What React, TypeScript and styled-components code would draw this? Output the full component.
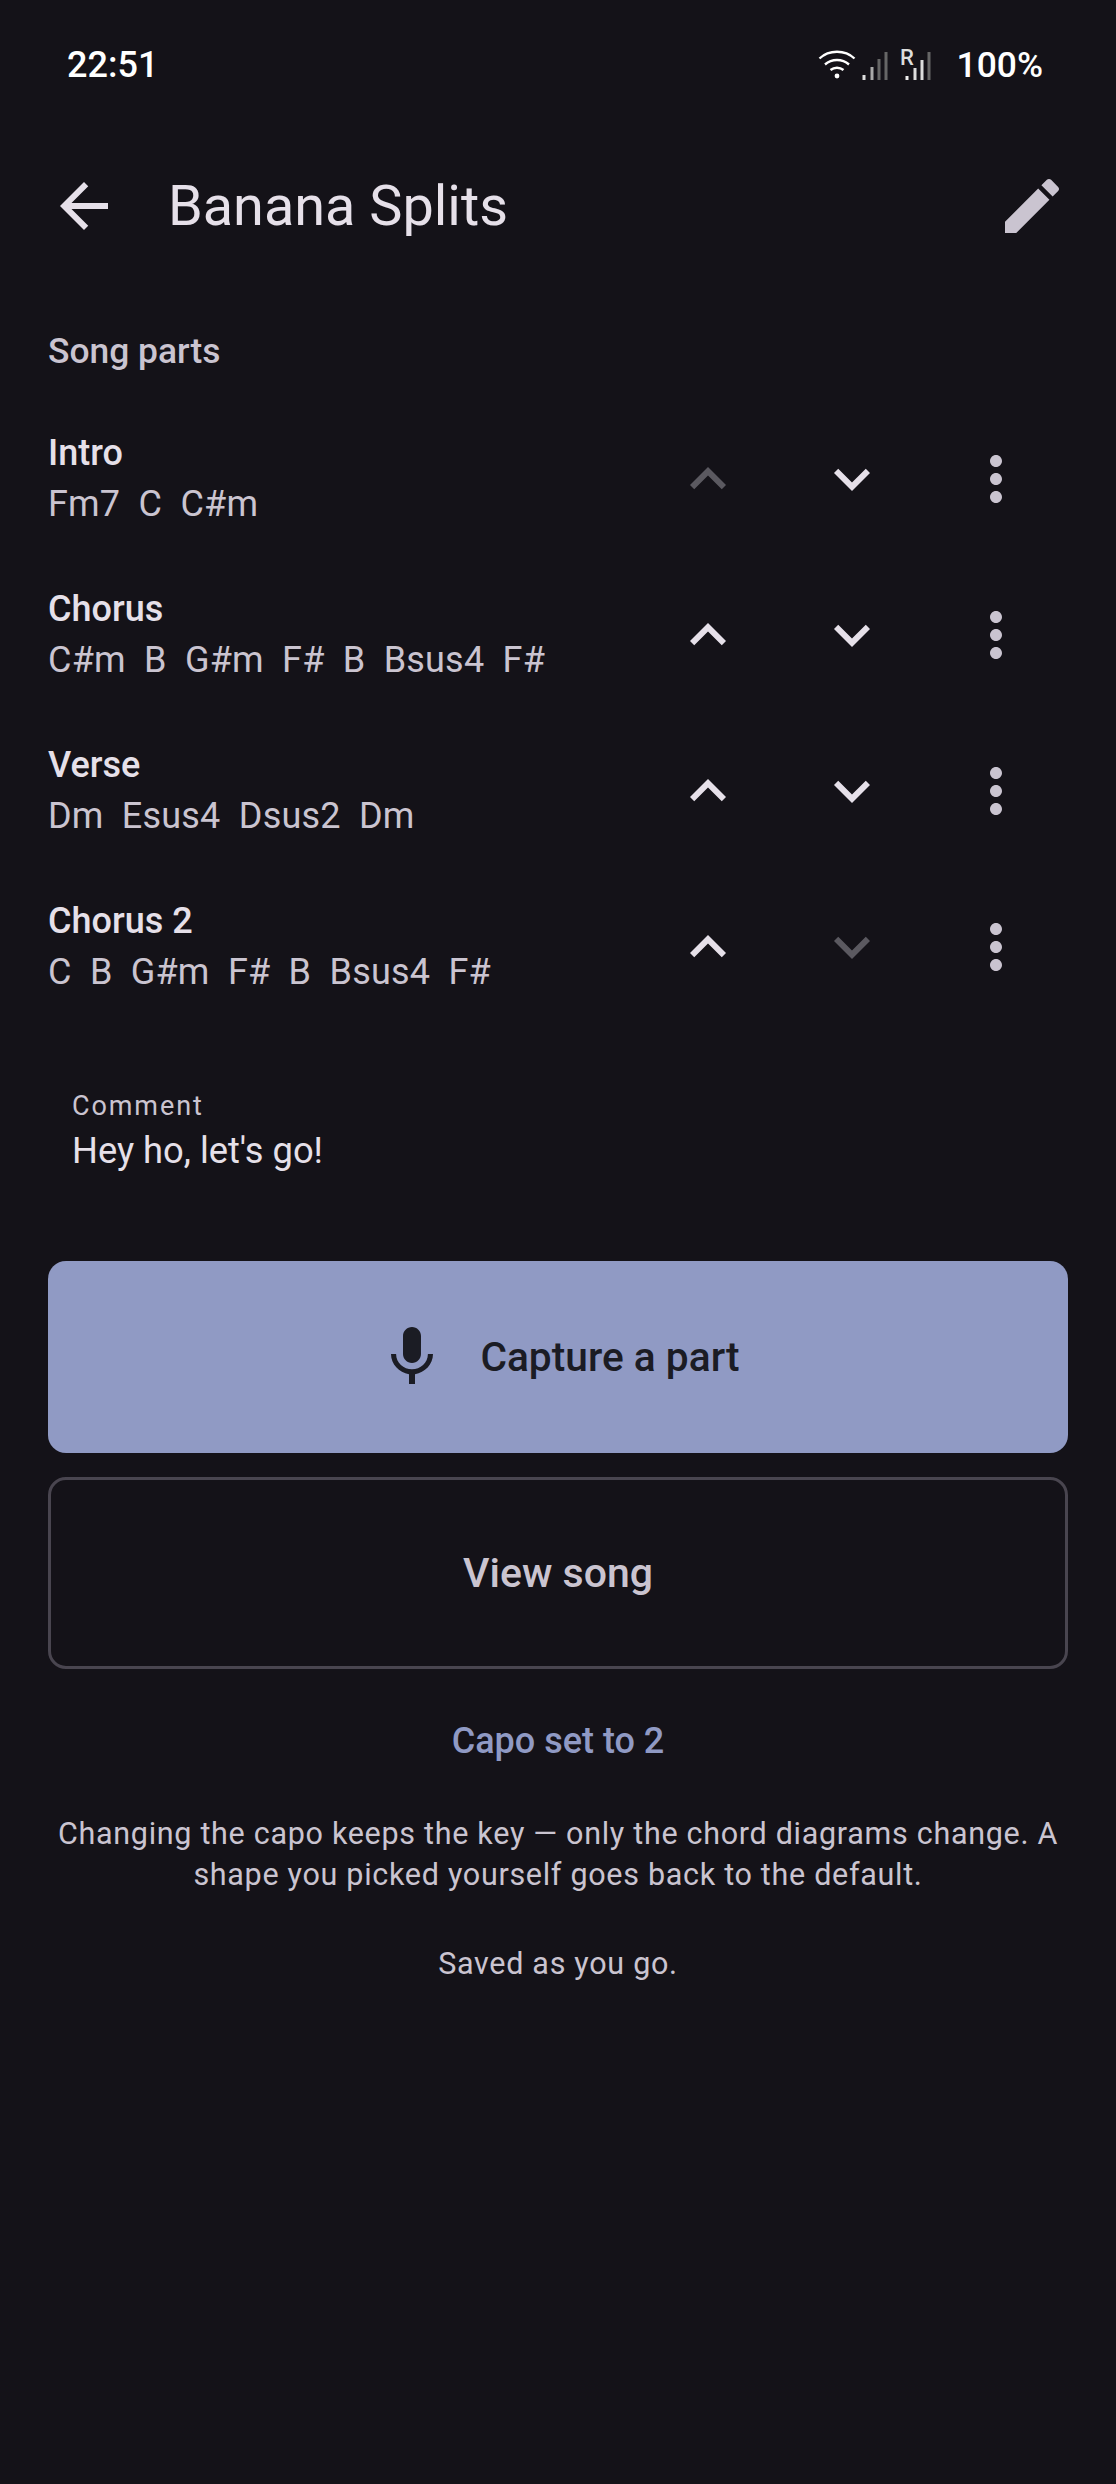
import * as React from 'react';
import styled, { createGlobalStyle } from 'styled-components';

const Color = {
  BG: '#141218',
  TEXT: '#E6E0E9',
  MUTED: '#CAC4D0',
  PRIMARY: '#909AC4',
  ON_PRIMARY: '#1B1C24',
  OUTLINE: '#49454F',
};

const GlobalStyle = createGlobalStyle`
  html, body {
    margin: 0;
    padding: 0;
    background: ${Color.BG};
  }
  * {
    box-sizing: border-box;
  }
`;

const Page = styled.div`
  width: 1116px;
  min-height: 2484px;
  background: ${Color.BG};
  color: ${Color.TEXT};
  font-family: Roboto, "Noto Sans", sans-serif;
  display: flex;
  flex-direction: column;
`;

const StatusBar = styled.div`
  height: 130px;
  padding: 0 73px 0 67px;
  display: flex;
  align-items: center;
  justify-content: space-between;
  color: #fff;
  font-size: 36px;
  font-weight: 500;
`;

const StatusRight = styled.div`
  display: flex;
  align-items: center;
  gap: 24px;
`;

const Battery = styled.span`
  font-size: 35.4px;
`;

const TopBar = styled.header`
  margin-top: 4px;
  height: 144px;
  padding: 0 12px;
  display: flex;
  align-items: center;
`;

const Title = styled.h1`
  flex: 1;
  margin: 0 0 0 12px;
  font-size: 55.8px;
  font-weight: 400;
  color: ${Color.TEXT};
`;

const IconButton = styled.div`
  width: 144px;
  height: 144px;
  flex: none;
  display: flex;
  align-items: center;
  justify-content: center;
`;

const SectionLabel = styled.div`
  margin-top: 41px;
  height: 64px;
  padding-left: 48px;
  display: flex;
  align-items: center;
  font-size: 35.4px;
  font-weight: 500;
  color: ${Color.MUTED};
`;

const PartList = styled.div`
  margin-top: 18px;
  padding: 0 48px;
  display: flex;
  flex-direction: column;
`;

const PartRow = styled.div`
  height: 156px;
  display: flex;
  align-items: center;
`;

const PartText = styled.div`
  flex: 1;
  min-width: 0;
`;

const PartName = styled.div`
  font-size: 36px;
  font-weight: 500;
  line-height: 50px;
  color: ${Color.TEXT};
`;

const PartChords = styled.div`
  font-size: 36px;
  letter-spacing: 0.2px;
  line-height: 52px;
  white-space: pre;
  color: ${Color.MUTED};
`;

const CommentBlock = styled.div`
  margin-top: 61px;
  padding: 0 72px;
`;

const CommentLabel = styled.div`
  font-size: 27px;
  font-weight: 400;
  letter-spacing: 1.9px;
  line-height: 40px;
  color: ${Color.MUTED};
`;

const CommentValue = styled.div`
  font-size: 36.3px;
  line-height: 50px;
  color: ${Color.TEXT};
`;

const Actions = styled.div`
  margin-top: 85px;
  padding: 0 48px;
  display: flex;
  flex-direction: column;
  gap: 24px;
`;

const PrimaryButton = styled.div`
  height: 192px;
  border-radius: 18px;
  background: ${Color.PRIMARY};
  color: ${Color.ON_PRIMARY};
  display: flex;
  align-items: center;
  justify-content: center;
  gap: 32px;
  font-size: 40.7px;
  font-weight: 500;
`;

const OutlineButton = styled.div`
  height: 192px;
  border-radius: 18px;
  border: 3px solid ${Color.OUTLINE};
  color: ${Color.MUTED};
  display: flex;
  align-items: center;
  justify-content: center;
  font-size: 41px;
  font-weight: 500;
`;

const CapoLink = styled.div`
  margin-top: 48px;
  text-align: center;
  font-size: 36px;
  font-weight: 500;
  line-height: 48px;
  color: ${Color.PRIMARY};
`;

const Note = styled.p`
  margin: ${(props: { $mt: number }) => props.$mt}px 0 0;
  padding: 0 48px;
  text-align: center;
  font-size: 30.5px;
  line-height: 41px;
  letter-spacing: 0.7px;
  color: ${Color.MUTED};
`;

const Glyph = ({ d, color, size = 72 }: { d: string; color: string; size?: number }) => (
  <svg width={size} height={size} viewBox="0 0 24 24" fill={color}>
    <path d={d} />
  </svg>
);

const ARROW_BACK = 'M20 11H7.83l5.59-5.59L12 4l-8 8 8 8 1.41-1.41L7.83 13H20v-2z';
const EDIT =
  'M3 17.25V21h3.75L17.81 9.94l-3.75-3.75L3 17.25zM20.71 7.04c.39-.39.39-1.02 0-1.41l-2.34-2.34c-.39-.39-1.02-.39-1.41 0l-1.83 1.83 3.75 3.75 1.83-1.83z';
const CHEVRON_UP = 'M7.41 15.41 12 10.83l4.59 4.58L18 14l-6-6-6 6z';
const CHEVRON_DOWN = 'M7.41 8.59 12 13.17l4.59-4.58L18 10l-6 6-6-6z';
const MORE_VERT =
  'M12 8c1.1 0 2-.9 2-2s-.9-2-2-2-2 .9-2 2 .9 2 2 2zm0 2c-1.1 0-2 .9-2 2s.9 2 2 2 2-.9 2-2-.9-2-2-2zm0 6c-1.1 0-2 .9-2 2s.9 2 2 2 2-.9 2-2-.9-2-2-2z';
const MIC =
  'M12 14c1.66 0 2.99-1.34 2.99-3L15 5c0-1.66-1.34-3-3-3S9 3.34 9 5v6c0 1.66 1.34 3 3 3zm5.3-3c0 3-2.54 5.1-5.3 5.1S6.7 14 6.7 11H5c0 3.41 2.72 6.23 6 6.72V21h2v-3.28c3.28-.48 6-3.3 6-6.72h-1.7z';

const DISABLED = '#5B5960';

const StatusIcons = () => (
  <svg width="116" height="44" viewBox="0 -4 116 44" fill="none">
    {/* wifi */}
    <path d="M2.5 11.5C12 2.5 28 2.5 37.5 11.5" stroke="#fff" strokeWidth="2.4" />
    <path d="M8 17.5c6.8-6 17.2-6 24 0" stroke="#fff" strokeWidth="2.4" />
    <path d="M13.5 23c3.8-3 9.2-3 13 0" stroke="#fff" strokeWidth="2.4" />
    <circle cx="20" cy="29" r="2.4" fill="#fff" />
    {/* first signal */}
    <rect x="45.5" y="28" width="3" height="5" fill="#ddd" />
    <rect x="53.5" y="20" width="3" height="13" fill="#aaa" />
    <rect x="60.5" y="12" width="3" height="21" fill="#666" />
    <rect x="67.5" y="5" width="3" height="28" fill="#666" />
    {/* roaming signal */}
    <text x="83" y="18" fontSize="22" fill="#ddd" fontFamily="Roboto, sans-serif">
      R
    </text>
    <rect x="88.5" y="29" width="3" height="4" fill="#eee" />
    <rect x="96.5" y="21" width="3" height="12" fill="#ddd" />
    <rect x="103.5" y="13" width="3" height="20" fill="#ddd" />
    <rect x="110.5" y="5" width="3" height="28" fill="#666" />
  </svg>
);

const parts = [
  { name: 'Intro', chords: 'Fm7  C  C#m', upOff: true, downOff: false },
  { name: 'Chorus', chords: 'C#m  B  G#m  F#  B  Bsus4  F#', upOff: false, downOff: false },
  { name: 'Verse', chords: 'Dm  Esus4  Dsus2  Dm', upOff: false, downOff: false },
  { name: 'Chorus 2', chords: 'C  B  G#m  F#  B  Bsus4  F#', upOff: false, downOff: true },
];

export default function App() {
  return (
    <Page>
      <GlobalStyle />
      <StatusBar>
        <span>22:51</span>
        <StatusRight>
          <StatusIcons />
          <Battery>100%</Battery>
        </StatusRight>
      </StatusBar>

      <TopBar>
        <IconButton>
          <Glyph d={ARROW_BACK} color={Color.TEXT} />
        </IconButton>
        <Title>Banana Splits</Title>
        <IconButton>
          <Glyph d={EDIT} color={Color.MUTED} />
        </IconButton>
      </TopBar>

      <SectionLabel>Song parts</SectionLabel>

      <PartList>
        {parts.map((part) => (
          <PartRow key={part.name}>
            <PartText>
              <PartName>{part.name}</PartName>
              <PartChords>{part.chords}</PartChords>
            </PartText>
            <IconButton>
              <Glyph d={CHEVRON_UP} color={part.upOff ? DISABLED : Color.TEXT} />
            </IconButton>
            <IconButton>
              <Glyph d={CHEVRON_DOWN} color={part.downOff ? DISABLED : Color.TEXT} />
            </IconButton>
            <IconButton>
              <Glyph d={MORE_VERT} color={Color.MUTED} />
            </IconButton>
          </PartRow>
        ))}
      </PartList>

      <CommentBlock>
        <CommentLabel>Comment</CommentLabel>
        <CommentValue>Hey ho, let's go!</CommentValue>
      </CommentBlock>

      <Actions>
        <PrimaryButton>
          <Glyph d={MIC} color={Color.ON_PRIMARY} />
          <span>Capture a part</span>
        </PrimaryButton>
        <OutlineButton>View song</OutlineButton>
      </Actions>

      <CapoLink>Capo set to 2</CapoLink>
      <Note $mt={48}>
        Changing the capo keeps the key — only the chord diagrams change. A shape you picked yourself goes back to the default.
      </Note>
      <Note $mt={48}>Saved as you go.</Note>
    </Page>
  );
}
